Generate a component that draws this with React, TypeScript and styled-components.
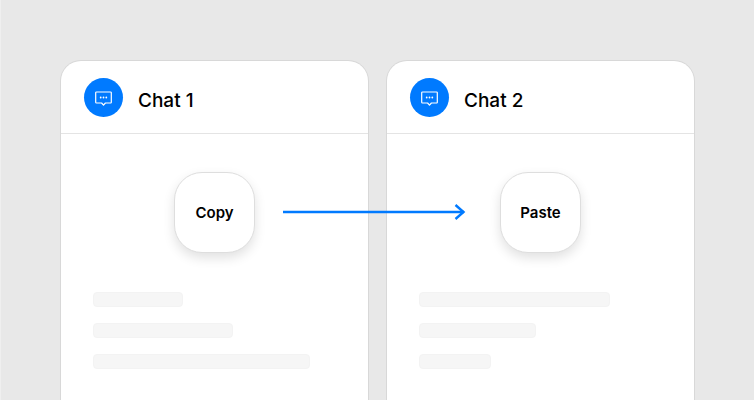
import React from "react";
import styled, { createGlobalStyle } from "styled-components";

const Global = createGlobalStyle`
  html, body { margin: 0; padding: 0; width: 754px; height: 400px; overflow: hidden; background: #e8e8e8; }
  * { box-sizing: border-box; }
`;

const Page = styled.main`
  position: relative;
  width: 754px;
  height: 400px;
  overflow: hidden;
  background: #e8e8e8;
  border-left: 1px solid #efefef;
  padding: 61px 0 0 60px;
  display: flex;
  gap: 19px;
  align-items: flex-start;
  font-family: Inter, "Liberation Sans", sans-serif;
`;

const Card = styled.section`
  width: 307px;
  height: 400px;
  flex: none;
  background: #fff;
  border-radius: 20px;
  box-shadow: 0 0 0 1px #d8d8d8;
`;

const Header = styled.header`
  height: 73px;
  padding: 1px 0 0 23px;
  display: flex;
  align-items: center;
  gap: 15px;
  border-bottom: 1px solid #e4e4e4;
`;

const Avatar = styled.div`
  width: 39px;
  height: 39px;
  border-radius: 50%;
  background: #007aff;
  display: flex;
  align-items: center;
  justify-content: center;
`;

const Title = styled.h2`
  margin: 6px 0 0;
  font-size: 19px;
  line-height: 24px;
  font-weight: 550;
  color: #000;
`;

const Body = styled.div`
  padding: 38px 0 0 32px;
`;

const ActionRow = styled.div`
  display: flex;
  padding-left: 81px;
  margin-bottom: 39px;
`;

const Action = styled.div`
  width: 81px;
  height: 81px;
  border-radius: 28px;
  background: #fff;
  border: 1px solid #dedede;
  box-shadow: 0 5px 12px rgba(0, 0, 0, 0.12);
  display: flex;
  align-items: center;
  justify-content: center;
  font-size: 15px;
  font-weight: 600;
  color: #000;
`;

const Bars = styled.div`
  display: flex;
  flex-direction: column;
  gap: 16px;
`;

const Bar = styled.div<{ $w: number }>`
  width: ${(p) => p.$w}px;
  height: 15px;
  border-radius: 4px;
  background: #f6f6f6;
  border: 1px solid #f3f3f3;
`;

const Arrow = styled.svg`
  position: absolute;
  left: 281px;
  top: 202px;
`;

const ChatIcon = () => (
  <svg width="17" height="17" viewBox="0 0 17 17" fill="none">
    <path
      d="M1.5 3H15.5A0.8 0.8 0 0 1 16.3 3.8V13.2A0.8 0.8 0 0 1 15.5 14H10.4L8.5 16.2L6.6 14H1.5A0.8 0.8 0 0 1 0.7 13.2V3.8A0.8 0.8 0 0 1 1.5 3Z"
      stroke="#fff"
      strokeWidth="1.2"
      strokeLinejoin="round"
    />
    <circle cx="5.7" cy="8.5" r="0.9" fill="#fff" />
    <circle cx="8.5" cy="8.5" r="0.9" fill="#fff" />
    <circle cx="11.3" cy="8.5" r="0.9" fill="#fff" />
  </svg>
);

const chats = [
  { title: "Chat 1", action: "Copy", bars: [90, 140, 217] },
  { title: "Chat 2", action: "Paste", bars: [191, 117, 72] },
];

export default function App() {
  return (
    <Page>
      <Global />
      {chats.map((c) => (
        <Card key={c.title}>
          <Header>
            <Avatar>
              <ChatIcon />
            </Avatar>
            <Title>{c.title}</Title>
          </Header>
          <Body>
            <ActionRow>
              <Action>{c.action}</Action>
            </ActionRow>
            <Bars>
              {c.bars.map((w, i) => (
                <Bar key={i} $w={w} />
              ))}
            </Bars>
          </Body>
        </Card>
      ))}
      <Arrow width="188" height="20" viewBox="0 0 188 20" fill="none">
        <path d="M1 10H182" stroke="#007aff" strokeWidth="2.4" />
        <path d="M173.5 3L181.5 10L173.5 17" stroke="#007aff" strokeWidth="2.4" />
      </Arrow>
    </Page>
  );
}
